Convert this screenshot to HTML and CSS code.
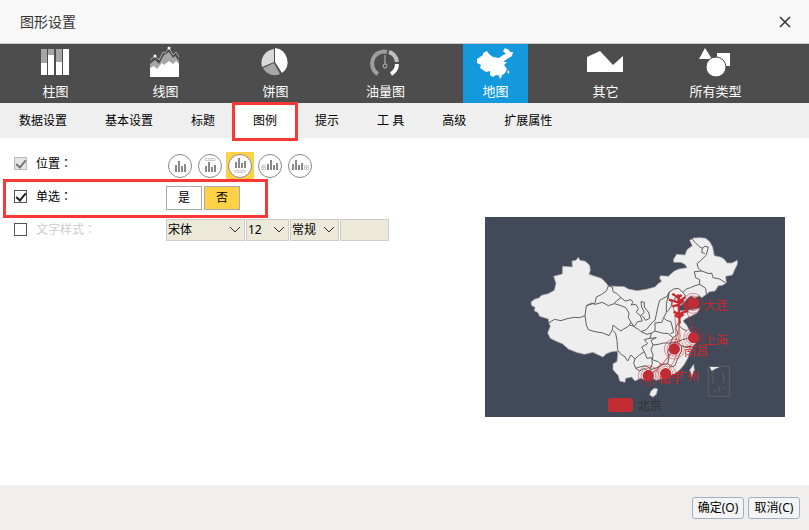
FILE: index.html
```html
<!DOCTYPE html>
<html lang="zh-CN">
<head>
<meta charset="utf-8">
<meta name="viewport" content="width=device-width, initial-scale=1">
<title>图形设置</title>
<link rel="stylesheet" href="styles.css">
</head>
<body>
<header class="titlebar">
  <h1>图形设置</h1>
  <button class="close" type="button" aria-label="关闭"><svg width="12" height="12" viewBox="0 0 12 12"><path d="M1 1 11 11M11 1 1 11" fill="none" stroke="#333" stroke-width="1.5"/></svg></button>
</header>
<nav class="types">
  <button type="button" class="type"><svg width="40" height="36" viewBox="1 -1 40 36"><g fill="#fff"><path d="M6 4h6v26H6zM13 4h6v26h-6zM21 4h6v26h-6zM28 4h6v26h-6z"/></g><path d="M6 4h6v14H6zM13 4h6v6h-6zM21 4h6v13h-6z" fill="#a6a6a6"/></svg><span>柱图</span></button>
  <button type="button" class="type"><svg width="40" height="36" viewBox="1 -1 40 36"><path d="M5 19 10 15 14 19 19 10 24 7 28 13 30 11 34 16V31H5z" fill="#a6a6a6"/><path d="M5 23 9 21 12 24 17 18 19 20 24 16 28 19 31 16 34 19V32H5z" fill="#fff"/><path d="M5 15 10 11 14 15 18 7 20 8 24 3 28 10 31 7 34 12" fill="none" stroke="#aaa"/><circle cx="10" cy="11" r="1.5" fill="#fff"/><circle cx="24" cy="3" r="1.5" fill="#fff"/></svg><span>线图</span></button>
  <button type="button" class="type"><svg width="40" height="36" viewBox="1 -1 40 36"><path d="M20 3a14 14 0 0 1 7 25L20 17z" fill="#fff"/><path d="M19 4V17L7 22A14 14 0 0 1 19 4" fill="#d9d9d9"/><path d="M8 23 19 18 25 29A13 13 0 0 1 8 23" fill="#a6a6a6"/></svg><span>饼图</span></button>
  <button type="button" class="type"><svg width="40" height="36" viewBox="1 -1 40 36"><g fill="none" stroke-width="4"><path d="M13 29A12 12 0 0 1 22 7" stroke="#9d9d9d"/><path d="M24 7a12 12 0 0 1 8 10" stroke="#bfbfbf"/><path d="M32 19a12 12 0 0 1-6 10" stroke="#fff"/></g><path d="M20 10v9" stroke="#bbb"/><circle cx="20" cy="21" r="2" fill="none" stroke="#bbb"/></svg><span>油量图</span></button>
  <button type="button" class="type active" aria-current="page"><svg width="40" height="36" viewBox="1 -1 40 36"><path d="M2 14 8 10 8 8 12 6 14 9 18 12 24 13 28 10 31 9 28 6 30 3 34 5 35 7 38 7 37 11 32 14 28 17 32 17 29 20 32 24 30 28 26 31 21 30 18 32 15 30 15 26 11 27 5 23 6 20 2 18zM24 31h3l-2 3zM32 27l2-2v4z" fill="#fff"/></svg><span>地图</span></button>
  <button type="button" class="type"><svg width="40" height="36" viewBox="1 -1 40 36"><path d="M2 12 15 6 28 20 38 11V27H2z" fill="#fff"/></svg><span>其它</span></button>
  <button type="button" class="type"><svg width="40" height="36" viewBox="1 -1 40 36"><path d="M10 3 17 14H4zM22 8h13v13H22z" fill="#fff"/><circle cx="21" cy="22" r="10" fill="#fff" stroke="#4d4d4d"/></svg><span>所有类型</span></button>
</nav>
<nav class="tabs">
  <button type="button">数据设置</button>
  <button type="button">基本设置</button>
  <button type="button">标题</button>
  <button type="button" class="current" aria-current="page">图例</button>
  <button type="button">提示</button>
  <button type="button">工 具</button>
  <button type="button">高级</button>
  <button type="button">扩展属性</button>
</nav>
<main>
  <form class="settings">
    <div class="row">
      <input type="checkbox" id="pos" checked disabled><label for="pos">位置<span class="colon" lang="zh-TW">：</span></label>
      <div class="places">
        <button type="button" aria-label="无图例"><svg width="26" height="26" viewBox="0 0 26 26"><circle cx="13" cy="13" r="11.5"/><path d="M8 12h2v7H8zM11 8h2v11h-2zM14 13h2v6h-2zM17 11h2v8h-2z"/></svg></button>
        <button type="button" aria-label="上"><svg width="26" height="26" viewBox="0 0 26 26"><circle cx="13" cy="13" r="11.5"/><path d="M8 13h2v6H8zM11 9h2v10h-2zM14 14h2v5h-2zM17 12h2v7h-2z"/><path class="grid" d="M8 5.500h10v2H8zM11.500 5v3M14.500 5v3"/></svg></button>
        <button type="button" class="chosen" aria-label="下"><svg width="26" height="26" viewBox="0 0 26 26"><circle cx="13" cy="13" r="11.5"/><path d="M8 9h2v6H8zM11 5h2v10h-2zM14 10h2v5h-2zM17 8h2v7h-2z"/><path class="grid" d="M8 17.500h10v2H8zM11.500 17v3M14.500 17v3"/></svg></button>
        <button type="button" aria-label="左"><svg width="26" height="26" viewBox="0 0 26 26"><circle cx="13" cy="13" r="11.5"/><path d="M10 11h2v6h-2zM13 7h2v10h-2zM16 12h2v5h-2zM19 10h2v7h-2z"/><path class="grid" d="M4.500 12.500h4v4h-4zM6.500 12v4M4 14.500h4"/></svg></button>
        <button type="button" aria-label="右"><svg width="26" height="26" viewBox="0 0 26 26"><circle cx="13" cy="13" r="11.5"/><path d="M5 11h2v6H5zM8 7h2v10H8zM11 12h2v5h-2zM14 10h2v7h-2z"/><path class="grid" d="M17.500 12.500h4v4h-4zM19.500 12v4M17 14.500h4"/></svg></button>
      </div>
    </div>
    <div class="row marked">
      <input type="checkbox" id="single" checked><label for="single">单选<span class="colon" lang="zh-TW">：</span></label>
      <div class="choice"><button type="button">是</button><button type="button" class="chosen">否</button></div>
    </div>
    <div class="row">
      <input type="checkbox" id="style"><label for="style" class="muted">文字样式<span class="colon" lang="zh-TW">：</span></label>
      <div class="fonts">
        <span class="pick family"><select aria-label="字体"><option>宋体</option></select><svg width="12" height="8" viewBox="0 0 12 8"><path d="M1 1l5 5 5-5"/></svg></span>
        <span class="pick size"><select aria-label="字号"><option>12</option></select><svg width="12" height="8" viewBox="0 0 12 8"><path d="M1 1l5 5 5-5"/></svg></span>
        <span class="pick weight"><select aria-label="字形"><option>常规</option></select><svg width="12" height="8" viewBox="0 0 12 8"><path d="M1 1l5 5 5-5"/></svg></span>
        <input class="color" type="text" aria-label="颜色">
      </div>
    </div>
  </form>
  <svg class="preview" viewBox="0 6 900 600" role="img" aria-label="地图">
    <g class="land">
      <path d="M138 261 150 252 160 250 170 241 190 236 208 226 213 205 206 184 232 177 233 154 262 156 261 138 273 136 280 127 285 136 301 139 314 151 316 166 312 178 330 184 349 190 360 200 370 213 418 215 430 222 456 227 484 223 510 216 518 207 530 199 524 190 526 182 550 184 568 168 582 162 606 158 600 148 586 142 566 142 566 132 575 118 600 120 606 104 622 92 614 76 626 69 646 68 662 70 674 80 683 96 688 122 706 126 717 132 726 144 741 144 757 136 757 148 750 162 742 180 722 184 724 204 712 211 700 212 690 228 674 230 664 238 650 248 642 242 628 250 618 242 606 252 592 268 580 274 584 288 602 286 622 284 644 280 636 294 620 302 604 310 594 318 606 332 614 348 624 360 628 374 632 384 624 394 616 410 608 430 598 448 586 463 570 476 548 484 532 490 514 496 500 488 482 494 466 490 450 498 440 486 422 490 420 502 404 498 400 482 384 464 384 446 396 440 398 422 398 408 380 410 364 416 354 426 336 418 324 412 298 418 274 412 250 402 232 386 212 378 196 370 188 354 196 334 192 324 190 312 178 308 164 304 158 292 148 288 150 276 140 272z"/>
      <path d="M498 528 508 520 518 522 514 538 504 546 494 540zM614 466l12-18 2 16-8 22z"/>
    </g>
    <g class="borders">
      <path d="M190 325 208 313 228 317 246 311 268 307 284 308 300 302 304 272 320 264 330 268 352 262 370 272 388 266 408 272 422 278 432 294 430 308 438 322 430 334 416 342 408 348 396 340 384 330 382 344 372 362 354 354 330 350 310 344 304 330 300 302"/>
      <path d="M304 272 330 264 334 246 350 238 364 228 370 213 382 216 384 230 396 236 408 248 394 258 388 266M408 248 420 258 438 254 444 262 438 270 452 268 460 280 454 292 466 302 472 318 458 320 448 334 434 330M466 302 478 292 470 276 468 260 478 262 478 276 492 294 494 310 482 316 472 302M438 322 448 336 462 344 468 350 484 344 500 324 510 316"/>
      <path d="M384 346 392 356 396 376 398 404 406 416 420 426 428 438 438 420 450 432 460 422 478 410 470 396 488 386 478 374 494 370 500 354 486 358 468 350M500 354 510 348 530 354 550 356 564 368 556 384 536 384 520 388 504 390 498 376 514 368 494 370M510 316 514 298 518 278 524 256 546 244 552 232 548 248 544 270 544 292 536 308 530 322 510 324 510 348M536 308 544 316 558 320 562 336 566 352 556 356"/>
      <path d="M504 390 498 404 504 420 502 434 520 440 530 450 548 446 552 428 548 412 554 396 556 384M450 432 446 444 452 460 464 456 480 452 496 460 502 446 500 428 486 430 478 410M452 460 464 468 478 460 490 470 502 462 516 458 530 450M548 446 558 456 570 452 578 430 590 408 590 392 574 382 556 384M564 368 580 356 572 340 578 326 590 340 606 348M590 392 604 398 620 394M574 382 592 374 608 370 624 370"/>
      <path d="M620 70 630 82 644 96 654 100 658 94 670 96 664 120 650 134 636 146 640 160 650 168 672 176 680 174 684 188 704 192 722 204M650 168 628 170 632 188 644 194 644 208 662 220 664 238M644 208 630 212 616 218 604 222 594 232 580 220 566 222 552 232 550 250 560 262 558 276 550 286 544 292M594 232 602 244M568 250 582 246 586 258 574 262zM652 100 650 112 660 116"/>
    </g>
    <g class="inset"><path d="M670 454h63v90h-63zM690 456l-10 22 6 16-6 12M712 470l6 22-6 14M718 514l-8 8M700 514l6 20M688 522l4 10"/><path class="fill" d="M674 456h30l-14 6-10 6z"/></g>
    <g class="routes"><path d="M582 320Q580 420 492 480M582 320Q598 410 542 476M582 320Q588 370 568 402M592 260Q618 310 626 368M562 260Q580 340 568 402Q530 460 490 482"/><path d="M500 452l-16 34M528 444l-12 28"/></g>
    <g class="rings"><circle cx="624" cy="265" r="22"/><circle cx="624" cy="265" r="30"/><circle cx="626" cy="368" r="22"/><circle cx="626" cy="368" r="30"/><circle cx="568" cy="402" r="22"/><circle cx="568" cy="402" r="30"/><circle cx="490" cy="482" r="22"/><circle cx="490" cy="482" r="30"/><circle cx="542" cy="476" r="22"/><circle cx="542" cy="476" r="30"/></g>
    <g class="dots"><circle cx="624" cy="265" r="18"/><circle cx="626" cy="368" r="17"/><circle cx="568" cy="402" r="17"/><circle cx="490" cy="482" r="17"/><circle cx="542" cy="476" r="17"/></g>
    <path class="burst" d="M584 326 582 290 580 238M562 236l18 12 10-8M552 254l26 8 24-16M562 274l18-4 16-14M566 290l16 8 26-12M598 264l10 28M570 300l12 8 14-10"/>
    <g class="names"><text x="656" y="286">大连</text><text x="656" y="390">上海</text><text x="597" y="422">南昌</text><text x="522" y="503">南宁</text><text x="570" y="498">广州</text></g>
    <rect class="swatch" x="369" y="549" width="75" height="42" rx="9"/>
    <text class="legend" x="458" y="585">北京</text>
  </svg>
</main>
<footer>
  <button type="button">确定(O)</button>
  <button type="button">取消(C)</button>
</footer>
</body>
</html>
```
FILE: styles.css
```css
*, *::after { box-sizing: border-box; }
body {
  margin: 0;
  min-height: 100vh;
  display: flex;
  flex-direction: column;
  background: #fff;
  color: #000;
  font: 12px/16px "Noto Sans", "Noto Sans CJK SC", sans-serif;
}
button, input, select { font: inherit; color: inherit; margin: 0; }
button { padding: 0; border: 0; background: none; }
svg { display: block; flex: none; }

.titlebar {
  height: 44px;
  padding: 0 18px 0 20px;
  display: flex;
  align-items: center;
  justify-content: space-between;
  background: #f8f8f8;
  border-bottom: 1px solid #c8cccc;
}
.titlebar h1 { margin: 0; font-size: 14px; font-weight: 400; color: #333; }

.types {
  height: 59px;
  padding-left: 23px;
  display: flex;
  gap: 45px;
  background: #4d4d4d;
}
.type {
  width: 65px;
  display: flex;
  flex-direction: column;
  align-items: center;
  gap: 3px;
  color: #fff;
  font-size: 13px;
  white-space: nowrap;
}
.type.active { background: #1499dc; }

.tabs { height: 35px; display: flex; background: #efefef; }
.tabs button { padding: 0 19px; white-space: nowrap; }
.tabs .current { position: relative; background: #fff; }
.tabs .current::after {
  content: "";
  position: absolute;
  inset: -1px -2px -3px;
  border: 3px solid #fb3838;
}

main { flex: 1; display: flex; justify-content: space-between; padding-right: 24px; }
.settings { padding: 9px 0 0 14px; }
.row { height: 33px; display: flex; align-items: center; position: relative; }
.row label { width: 130px; color: #000; }
.row label.muted { color: #ccc; }
.colon { font-family: "Noto Sans CJK TC", sans-serif; line-height: 1; }
.row input[type="checkbox"] {
  appearance: none;
  width: 13px;
  height: 13px;
  margin-right: 9px;
  border: 1px solid #555;
  background: #fff;
  display: grid;
  place-items: center;
}
.row input[type="checkbox"]:checked::after {
  content: "";
  width: 10px;
  height: 6px;
  border: solid #222;
  border-width: 0 0 2px 2px;
  transform: translateY(-1px) rotate(-50deg);
}
.row input[type="checkbox"]:disabled { border-color: #bbb; background: #e6e6e6; }
.row input[type="checkbox"]:disabled::after { border-color: #777; }

.marked::after {
  content: "";
  position: absolute;
  inset: -1px auto -5px -11px;
  width: 265px;
  border: 3px solid #fb3838;
  pointer-events: none;
}
.places { display: flex; gap: 2px; padding-top: 5px; }
.places button { width: 28px; height: 28px; display: grid; place-items: center; }
.places svg { fill: #888; }
.places circle { fill: #fff; stroke: #888; }
.places .grid { fill: none; stroke: #ccc; }
.places .chosen, .choice .chosen { background: #ffd147; }

.choice { display: flex; gap: 2px; padding-top: 3px; }
.choice button { width: 36px; height: 24px; border: 1px solid #aaa; }

.fonts { display: flex; gap: 1px; }
.pick { position: relative; }
.pick select, .color {
  appearance: none;
  display: block;
  width: 100%;
  height: 22px;
  padding: 0 1px;
  border: 1px solid #ccc;
  border-radius: 0;
  background: #ece9d8;
}
.pick svg { position: absolute; right: 4px; top: 7px; fill: none; stroke: #333; pointer-events: none; }
.family { width: 79px; }
.size { width: 43px; }
.weight, .fonts .color { width: 49px; }

.preview { width: 300px; margin-top: 79px; align-self: flex-start; background: #424a59; }
.land { fill: #eee; stroke: #aaa; stroke-width: 2; }
.borders { fill: none; stroke: #606060; stroke-width: 3; }
.inset { fill: none; stroke: #606060; stroke-width: 3; }
.inset .fill { fill: #eee; stroke: none; }
.routes { fill: none; stroke: #c23531; stroke-width: 3; opacity: .6; }
.rings { fill: none; stroke: #c9283a; stroke-width: 3; opacity: .5; }
.dots, .swatch { fill: #c22d35; }
.burst { fill: none; stroke: #c9282f; stroke-width: 7; }
.names { fill: #c9282f; font-size: 36px; }
.legend { fill: #333; font-size: 36px; }

footer {
  height: 45px;
  padding: 0 9px;
  display: flex;
  align-items: center;
  justify-content: flex-end;
  gap: 4px;
  background: #f0efee;
}
footer button {
  width: 52px;
  height: 22px;
  border: 1px solid #a0b0c0;
  border-radius: 3px;
  background: #f4f4f4;
  white-space: nowrap;
}
```
